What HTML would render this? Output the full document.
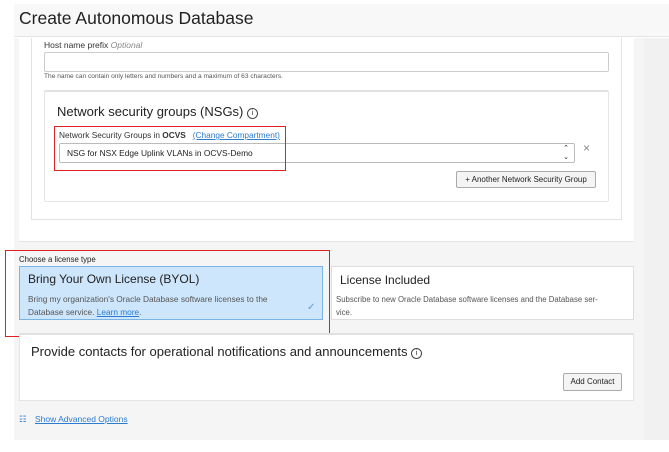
<!DOCTYPE html>
<html><head><style>
*{box-sizing:border-box;margin:0;padding:0}
body{width:669px;height:452px;background:#fff;font-family:"Liberation Sans",sans-serif;color:#222;position:relative;overflow:hidden}
.a{position:absolute}
</style></head><body>
<div class="a" style="left:14px;top:4px;width:655px;height:33px;background:#f8f8f8;border-bottom:1px solid #e4e4e4"></div>
<div class="a" style="left:19px;top:8px;font-size:17.5px;color:#222">Create Autonomous Database</div>
<div class="a" style="left:14px;top:38px;width:630px;height:402px;background:#f5f5f5"></div>
<div class="a" style="left:644px;top:38px;width:25px;height:402px;background:#f1f1f1"></div>
<div class="a" style="left:19px;top:38px;width:615px;height:204px;background:#fff;border-bottom:1px solid #e4e4e4"></div>
<div class="a" style="left:31px;top:38px;width:591px;height:182px;background:#fff;border:1px solid #e2e2e2;border-top:none"></div>
<div class="a" style="left:44px;top:40px;font-size:8.5px;color:#333">Host name prefix <i style="color:#888">Optional</i></div>
<div class="a" style="left:44px;top:52px;width:565px;height:20px;border:1px solid #ccc;border-radius:2px;background:#fff"></div>
<div class="a" style="left:44px;top:73px;font-size:6.6px;color:#555">The name can contain only letters and numbers and a maximum of 63 characters.</div>
<div class="a" style="left:44px;top:90px;width:565px;height:112px;border:1px solid #e6e6e6;border-top:2px solid #e2e2e2;border-radius:2px"></div>
<div class="a" style="left:57px;top:104px;font-size:13px;color:#222">Network security groups (NSGs) <span style="display:inline-block;width:11px;height:11px;border:1px solid #444;border-radius:50%;font-size:7px;text-align:center;line-height:9px;vertical-align:1px">i</span></div>
<div class="a" style="left:59px;top:130px;font-size:8.3px;color:#333">Network Security Groups in <b>OCVS</b> &nbsp; <span style="color:#2b7bd0;text-decoration:underline">(Change Compartment)</span></div>
<div class="a" style="left:59px;top:143px;width:516px;height:20px;border:1px solid #bbb;border-radius:2px;font-size:8.4px;line-height:18px;padding-left:7px;color:#222">NSG for NSX Edge Uplink VLANs in OCVS-Demo<span style="position:absolute;right:5px;top:0;font-size:7px;line-height:9px;text-align:center">⌃<br>⌄</span></div>
<div class="a" style="left:583px;top:141px;font-size:12px;color:#888">×</div>
<div class="a" style="left:54px;top:126px;width:232px;height:45px;border:1px solid #e02020"></div>
<div class="a" style="left:456px;top:171px;width:140px;height:17px;border:1px solid #aaa;border-radius:2px;background:#f4f4f4;font-size:8px;line-height:15px;text-align:center;color:#222">+ Another Network Security Group</div>
<div class="a" style="left:19px;top:255px;font-size:7.8px;color:#222">Choose a license type</div>
<div class="a" style="left:19px;top:266px;width:304px;height:54px;background:#cde6fb;border:1px solid #7ab3e6"></div>
<div class="a" style="left:28px;top:272px;font-size:12px;color:#222">Bring Your Own License (BYOL)</div>
<div class="a" style="left:28px;top:293px;font-size:8.3px;color:#555;line-height:13px">Bring my organization's Oracle Database software licenses to the<br>Database service. <span style="color:#2b7bd0;text-decoration:underline">Learn more</span>.</div>
<div class="a" style="left:307px;top:302px;font-size:10px;color:#5b9ad8">✓</div>
<div class="a" style="left:331px;top:266px;width:303px;height:54px;background:#fff;border:1px solid #ddd"></div>
<div class="a" style="left:340px;top:273px;font-size:12px;color:#222">License Included</div>
<div class="a" style="left:336px;top:293px;font-size:7.8px;color:#555;line-height:13px">Subscribe to new Oracle Database software licenses and the Database ser-<br>vice.</div>
<div class="a" style="left:5px;top:250px;width:325px;height:87px;border:1px solid #e02020"></div>
<div class="a" style="left:19px;top:333px;width:615px;height:68px;background:#fff;border:1px solid #e4e4e4;border-top:2px solid #e0e0e0"></div>
<div class="a" style="left:31px;top:344px;font-size:13px;color:#222">Provide contacts for operational notifications and announcements <span style="display:inline-block;width:11px;height:11px;border:1px solid #444;border-radius:50%;font-size:7px;text-align:center;line-height:9px;vertical-align:1px">i</span></div>
<div class="a" style="left:563px;top:373px;width:59px;height:18px;border:1px solid #aaa;border-radius:2px;background:#f4f4f4;font-size:8px;line-height:16px;text-align:center">Add Contact</div>
<div class="a" style="left:19px;top:414px;font-size:8.5px;color:#2b7bd0">☷ <span style="text-decoration:underline;margin-left:6px">Show Advanced Options</span></div>
</body></html>
